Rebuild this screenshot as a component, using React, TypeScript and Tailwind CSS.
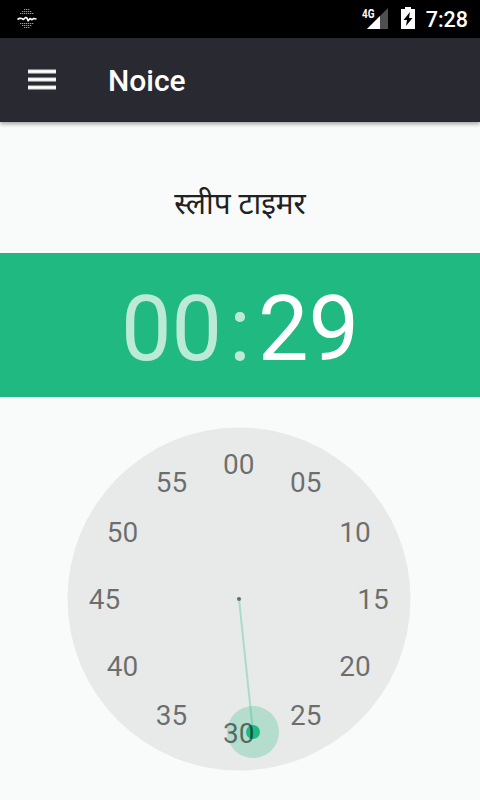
import React from 'react';

const CENTER_X = 239;
const CENTER_Y = 202;
const LABEL_RADIUS = 134.3;
const LABELS = ['00', '05', '10', '15', '20', '25', '30', '35', '40', '45', '50', '55'];

function NoiseIcon() {
  return (
    <svg className="ml-[17px]" width="20" height="22" viewBox="0 0 20 22" fill="none">
      <g stroke="#9a9a9a" strokeWidth="1.2" strokeDasharray="1.3 0.7">
        <path d="M7 1.500h6M5 3.500h10M3 5.500h14M3 15.500h14M5 17.500h10M7 19.500h6" />
      </g>
      <path
        d="M.5 11.500l2-1.200 2.300.2 1.700 1L8.500 9.500l1.300.3 1.400 3 1.800-2.300 2 1.200 1.800-1.200 2.700.5"
        stroke="#fff"
        strokeWidth="1.600"
        strokeLinejoin="round"
      />
    </svg>
  );
}

function StatusBar() {
  return (
    <div className="flex h-[38px] items-center bg-black">
      <NoiseIcon />
      <svg className="ml-auto overflow-visible" width="28" height="24" viewBox="0 0 28 24">
        <path d="M26 1v21H5z" fill="#4f4f4f" />
        <path d="M18 9v13H5z" fill="#fff" />
        <text x="0" y="11" className="font-['Roboto'] text-[13px] font-bold" fill="#fff" stroke="#000" strokeWidth="2" paintOrder="stroke" textLength="12.500" lengthAdjust="spacingAndGlyphs">
          4G
        </text>
      </svg>
      <svg className="mb-[2px] ml-[11px]" width="14" height="22" viewBox="0 0 14 22">
        <path d="M4 0h6v2h4v20H0V2h4z" fill="#fff" />
        <path d="M9 5L2.500 13H6l-1 6 6.500-8H8z" fill="#000" />
      </svg>
      <span className="mr-[12px] ml-[11px] pt-[2px] text-[21.5px] leading-none font-medium text-white">7:28</span>
    </div>
  );
}

function MenuBar() {
  return <span className="h-[5px] w-7 border-y border-[#85858a] bg-linear-to-b from-[#e4e4e5] via-white to-[#e4e4e5]" />;
}

function Toolbar() {
  return (
    <header className="relative flex h-[84px] items-center bg-[#292932] shadow-[0_2px_4px_rgba(0,0,0,0.35)]">
      <div className="mb-px ml-7 flex flex-col gap-[3px]">
        <MenuBar />
        <MenuBar />
        <MenuBar />
      </div>
      <h1 className="ml-[52px] pt-px text-[30px] leading-none font-medium text-white">Noice</h1>
    </header>
  );
}

function Dial() {
  return (
    <svg width="480" height="403" viewBox="0 0 480 403" className="block">
      <circle cx={CENTER_X} cy={CENTER_Y} r="171.500" fill="#e8eae9" />
      <circle cx={CENTER_X} cy={CENTER_Y} r="2" fill="#666867" />
      <path d="M239 202L253 335" stroke="#1fb981" strokeOpacity="0.3" strokeWidth="2" />
      <circle cx="253" cy="335" r="26" fill="#1fb981" fillOpacity="0.26" />
      <circle cx="253" cy="335" r="7" fill="#1fb981" />
      <g className="font-['Roboto'] text-[28px]" fill="#000" fillOpacity="0.54" textAnchor="middle">
        {LABELS.map((label, i) => {
          const angle = (i * Math.PI) / 6;
          return (
            <text
              key={label}
              x={CENTER_X - 0.3 + LABEL_RADIUS * Math.sin(angle)}
              y={CENTER_Y + 9.7 - LABEL_RADIUS * Math.cos(angle)}
            >
              {label}
            </text>
          );
        })}
      </g>
    </svg>
  );
}

export default function App() {
  return (
    <div className="flex h-[800px] w-[480px] flex-col overflow-hidden bg-[#f9fbfa] font-['Roboto','Noto_Sans',sans-serif]">
      <StatusBar />
      <Toolbar />
      <div className="flex h-[131px] items-center justify-center pt-[30px]">
        <h2 className="font-['Noto_Sans','Noto_Sans_Devanagari',sans-serif] text-[29.8px] leading-none whitespace-nowrap text-[#212121]">स्लीप टाइमर</h2>
      </div>
      <div className="flex h-[144px] items-center justify-center gap-[7px] bg-[#1fb981] pt-[9px] text-[90px] leading-none text-white">
        <span className="text-white/70">00</span>
        <span className="text-white/70">:</span>
        <span>29</span>
      </div>
      <Dial />
    </div>
  );
}
